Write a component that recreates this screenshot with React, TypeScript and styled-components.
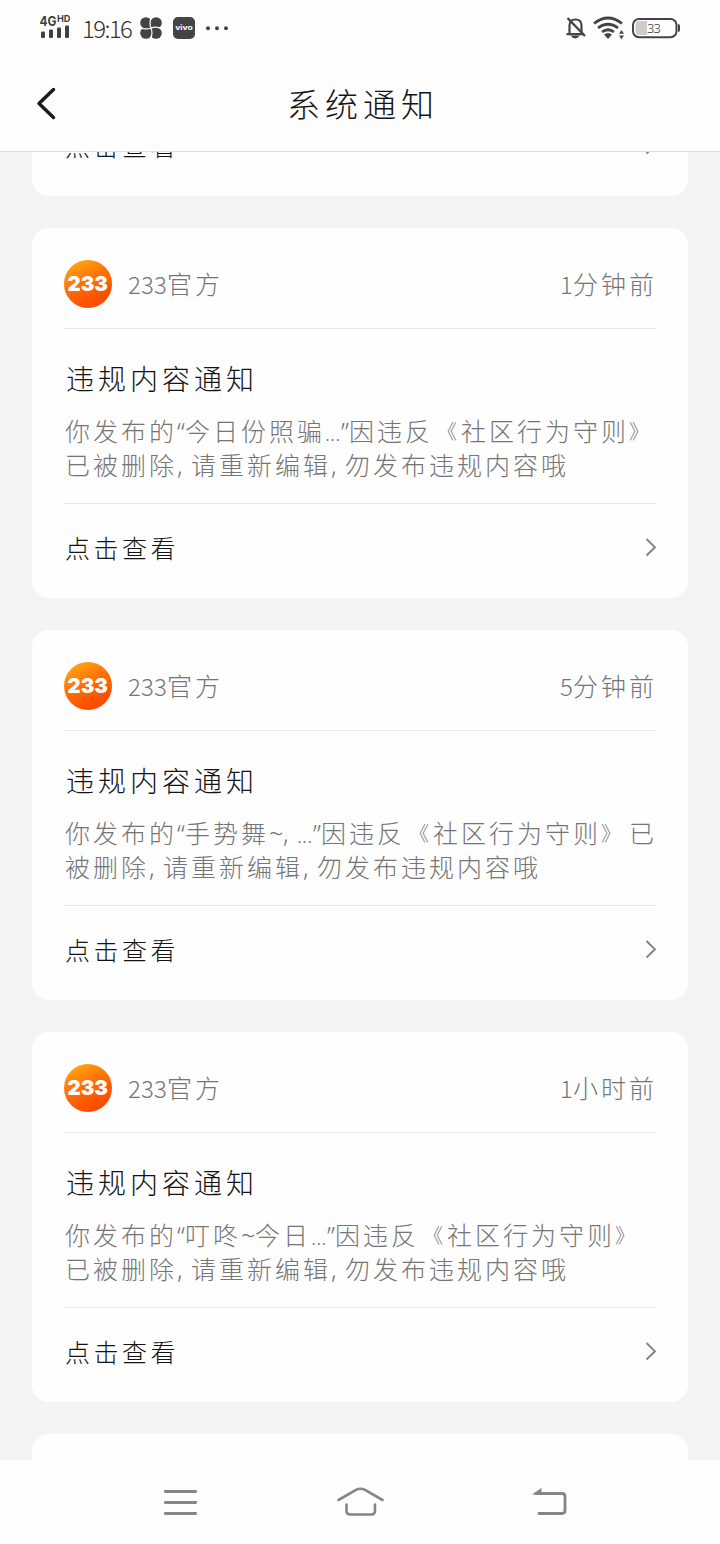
import React from "react";
import styled, { createGlobalStyle } from "styled-components";

const GlobalStyle = createGlobalStyle`
  * { box-sizing: border-box; }
  body { margin: 0; background: #fefefe; }
`;

const Screen = styled.div`
  width: 720px;
  height: 1544px;
  display: flex;
  flex-direction: column;
  overflow: hidden;
  background: #fefefe;
  color: #141414;
  font-family: "Noto Sans CJK SC", sans-serif;
  font-weight: 300;
`;

const StatusBar = styled.div`
  height: 56px;
  flex: none;
  display: flex;
  justify-content: space-between;
  padding: 0 39px 0 40px;
`;

const StatusGroup = styled.div`
  display: flex;
  align-items: center;
`;

const Clock = styled.span`
  width: 51px;
  margin: 0 7px 0 10px;
  font-size: 24px;
  line-height: 54px;
  letter-spacing: -1.6px;
  white-space: nowrap;
  color: #333;
`;

const TitleBar = styled.header`
  height: 96px;
  flex: none;
  display: grid;
  grid-template-columns: 60px 1fr 60px;
  align-items: center;
  border-bottom: 1px solid #dfdfdf;
  padding: 0 32px;
`;

const PageTitle = styled.h1`
  margin: -2px 0 0;
  padding-left: 6px;
  text-align: center;
  font-size: 33px;
  font-weight: 300;
  line-height: 40px;
  letter-spacing: 5px;
`;

const Feed = styled.main`
  height: 1308px;
  flex: none;
  overflow: hidden;
  background: #f4f4f4;
  padding: 0 32px;
`;

const CardList = styled.div`
  display: flex;
  flex-direction: column;
  gap: 32px;
  margin-top: -50px;
`;

const Card = styled.article`
  flex: none;
  padding: 0 32px;
  border-radius: 17px;
  background: #fefefe;
`;

const EmptyCard = styled(Card)`
  height: 370px;
`;

const CardHead = styled.div`
  height: 101px;
  display: flex;
  align-items: center;
  padding: 12px 0 0;
  border-bottom: 1px solid #e8e8e8;
`;

const Sender = styled.span`
  flex: 1;
  margin: -2px 0 0 16px;
  font-size: 25px;
  line-height: 36px;
  letter-spacing: 3px;
  color: #757575;
`;

const Time = styled(Sender)`
  flex: none;
  margin: -2px -1px 0 0;
`;

const Digit = styled.span`
  display: inline-block;
  width: 13px;
  letter-spacing: 0;
  font-size: 24px;
`;

const CardBody = styled.div`
  height: 175px;
  padding-top: 29px;
  border-bottom: 1px solid #e8e8e8;
`;

const Subject = styled.h2`
  margin: 0 0 15px;
  padding-left: 2px;
  font-size: 28px;
  font-weight: 300;
  line-height: 40px;
  letter-spacing: 4px;
`;

const Line = styled.p`
  margin: 0;
  padding-left: 1px;
  font-size: 25px;
  line-height: 34px;
  letter-spacing: 3px;
  white-space: nowrap;
  color: #757575;
`;

const Mark = styled.span<{ $w: number }>`
  display: inline-block;
  width: ${(p) => p.$w}px;
  font-family: "Noto Sans", "Noto Sans CJK SC", sans-serif;
  line-height: 1;
  letter-spacing: 0;
`;

const Bracket = styled.span<{ $open: boolean }>`
  display: inline-block;
  width: 28px;
  padding-right: ${(p) => (p.$open ? 4 : 0)}px;
  text-align: ${(p) => (p.$open ? "right" : "left")};
  font-size: 20px;
  line-height: 1;
  letter-spacing: 0;
  vertical-align: 2px;
`;

const CardFoot = styled.div`
  height: 94px;
  display: flex;
  align-items: center;
  justify-content: space-between;
  padding: 0 0 9px 1px;
`;

const FootLabel = styled.span`
  padding-top: 1px;
  font-size: 25px;
  letter-spacing: 3.5px;
`;

const NavBar = styled.nav`
  height: 84px;
  flex: none;
  background: #fefefe;
  display: grid;
  grid-template-columns: 179px 194px 50px;
  padding: 18px 0 0 156px;
`;

const markWidths: Record<string, number> = { "“": 8, "”": 8, "…": 16, ",": 14, "~": 14 };

const renderMarks = (text: string) =>
  text.split(/([“”…,~《》])/).map((part, i) => {
    if (part === "《" || part === "》") {
      return (
        <Bracket key={i} $open={part === "《"}>
          {part}
        </Bracket>
      );
    }
    return part in markWidths ? (
      <Mark key={i} $w={markWidths[part]}>
        {part === "…" ? <small>...</small> : part}
      </Mark>
    ) : (
      part
    );
  });

const renderDigits = (text: string) =>
  text.split(/(\d)/).map((part, i) => (/^\d$/.test(part) ? <Digit key={i}>{part}</Digit> : part));

const Signal = () => (
  <svg width="32" height="28" viewBox="0 0 32 28" fill="#3f3f3f">
    <text x="-0.5" y="11.5" fontFamily="Inter" fontWeight="700" fontSize="13" textLength="17" lengthAdjust="spacingAndGlyphs">4G</text>
    <text x="17" y="8" fontFamily="Inter" fontWeight="700" fontSize="9.5" textLength="13.5" lengthAdjust="spacingAndGlyphs">HD</text>
    <rect x="1" y="17.500" width="4" height="6.500" rx="1.2" />
    <rect x="9" y="15.500" width="4" height="8.500" rx="1.2" />
    <rect x="17" y="13.500" width="4" height="10.500" rx="1.2" />
    <rect x="25" y="11.500" width="4" height="12.500" rx="1.2" />
  </svg>
);

const Pinwheel = () => (
  <svg width="22" height="22" viewBox="0 0 22 22">
    <g fill="#444">
      <circle cx="5.900" cy="5.900" r="5.700" />
      <circle cx="16.100" cy="5.900" r="5.700" />
      <circle cx="5.900" cy="16.100" r="5.700" />
      <circle cx="16.100" cy="16.100" r="5.700" />
      <rect x="6" y="6" width="10" height="10" />
    </g>
    {[0, 90, 180, 270].map((a) => (
      <path key={a} transform={`rotate(${a} 11 11)`} d="M11 11Q8.800 5.500 11.600 0" fill="none" stroke="#fefefe" strokeWidth="1.200" />
    ))}
  </svg>
);

const BadgeSvg = styled.svg`
  margin-left: 11px;
`;

const VivoBadge = () => (
  <BadgeSvg width="22" height="22" viewBox="0 0 22 22">
    <rect width="22" height="22" rx="5" fill="#444" />
    <text x="2.200" y="13.200" fill="#fff" fontFamily="Inter" fontWeight="700" fontSize="6.500" textLength="17.600" lengthAdjust="spacingAndGlyphs">vivo</text>
  </BadgeSvg>
);

const DotsSvg = styled.svg`
  margin-left: 10px;
`;

const Dots = () => (
  <DotsSvg width="24" height="6" viewBox="0 0 24 6" fill="#444">
    <circle cx="3" cy="3.300" r="2" />
    <circle cx="12" cy="3.300" r="2" />
    <circle cx="21" cy="3.300" r="2" />
  </DotsSvg>
);

const StatusIcons = () => (
  <svg width="116" height="26" viewBox="565 15 116 26" fill="none" stroke="#444" strokeWidth="2.2">
    <path d="M569.5 34V25.5Q569.5 19.5 575.5 19.5Q581.5 19.5 581.5 25.5V34M566.5 34.2H584" />
    <path d="M567.5 18L585 36" strokeWidth="2.4" />
    <path d="M570.5 35.5Q575 41.5 580 35.5Z" fill="#444" stroke="none" />
    <path d="M594 23.5Q608 12.5 622 23.5M598 28Q608 20.5 618 28M602 32Q608 27.5 614 32" strokeWidth="2.7" />
    <path d="M604 34.5Q608 31.5 612 34.5L608 39Z" fill="#444" stroke="none" />
    <path d="M619 33.8L621.5 30L624 33.8ZM619 35.5H624L621.5 39.2Z" fill="#444" stroke="none" />
    <rect x="633" y="19" width="43.5" height="18.2" rx="6" strokeWidth="2" />
    <path d="M639 21H647V35H639Q635.5 35 635.5 31.5V24.5Q635.5 21 639 21Z" fill="#ccc" stroke="none" />
    <path d="M678 24Q680 24 680 26V30Q680 32 678 32Z" fill="#444" stroke="none" />
    <text x="647" y="32.500" fill="#333" stroke="none" fontFamily="Noto Sans" fontSize="13" textLength="14">33</text>
  </svg>
);

const BackChevron = () => (
  <svg width="28" height="34" viewBox="0 0 28 34" fill="none" stroke="#1c1c1c" strokeWidth="3.5" strokeLinecap="round" strokeLinejoin="round">
    <path d="M21.5 2.500L7 16.500L21.5 30.500" />
  </svg>
);

const Chevron = () => (
  <svg width="12" height="20" viewBox="0 0 12 20" fill="none" stroke="#858585" strokeWidth="2">
    <path d="M2.500 2L11 10.300L2.500 18.500" />
  </svg>
);

const AvatarSvg = styled.svg`
  flex: none;
  margin-top: -1px;
`;

const Avatar = () => (
  <AvatarSvg width="48" height="48" viewBox="0 0 48 48">
    <defs>
      <linearGradient id="sun" x1="0.15" y1="0" x2="0.6" y2="0.9">
        <stop offset="0" stopColor="#ffae12" />
        <stop offset="0.5" stopColor="#ff7208" />
        <stop offset="1" stopColor="#fc4c00" />
      </linearGradient>
    </defs>
    <circle cx="24" cy="24" r="24" fill="url(#sun)" />
    <text x="3.500" y="31.200" fill="#fff" fontFamily="Inter" fontWeight="900" fontSize="20.500" textLength="40.500" lengthAdjust="spacingAndGlyphs">233</text>
  </AvatarSvg>
);

const MenuIcon = () => (
  <svg width="50" height="50" viewBox="0 0 50 50" fill="none" stroke="#858585" strokeWidth="2.8" strokeLinecap="round">
    <path d="M9.3 13.5H39.7M9.3 24.5H39.7M9.3 35.5H39.7" />
  </svg>
);

const HomeIcon = () => (
  <svg width="50" height="50" viewBox="0 0 50 50" fill="none" stroke="#858585" strokeWidth="2.6" strokeLinecap="round" strokeLinejoin="round">
    <path d="M3.500 22L21 11.900Q25.500 9.600 30 11.900L47.500 22M11.500 26.500V32.500Q11.500 36.500 15.500 36.500H36Q40 36.500 40 32.500V26.500" />
  </svg>
);

const ReturnIcon = () => (
  <svg width="50" height="50" viewBox="0 0 50 50" fill="none" stroke="#858585" strokeWidth="2.8" strokeLinecap="round">
    <path d="M7 15.500H33Q36 15.500 36 18.500V32.500Q36 35.500 33 35.500H10" />
    <path d="M3 16.500L12.500 10V16.500Z" fill="#858585" stroke="none" />
  </svg>
);

interface Notice {
  time: string;
  lines: string[];
}

const notices: Notice[] = [
  { time: "1分钟前", lines: ["你发布的“今日份照骗…”因违反《社区行为守则》", "已被删除,请重新编辑,勿发布违规内容哦"] },
  { time: "5分钟前", lines: ["你发布的“手势舞~,…”因违反《社区行为守则》已", "被删除,请重新编辑,勿发布违规内容哦"] },
  { time: "1小时前", lines: ["你发布的“叮咚~今日…”因违反《社区行为守则》", "已被删除,请重新编辑,勿发布违规内容哦"] },
];

const ViewLink = () => (
  <CardFoot>
    <FootLabel>点击查看</FootLabel>
    <Chevron />
  </CardFoot>
);

const NoticeCard = ({ notice }: { notice: Notice }) => (
  <Card>
    <CardHead>
      <Avatar />
      <Sender>{renderDigits("233官方")}</Sender>
      <Time>{renderDigits(notice.time)}</Time>
    </CardHead>
    <CardBody>
      <Subject>违规内容通知</Subject>
      {notice.lines.map((line) => (
        <Line key={line}>{renderMarks(line)}</Line>
      ))}
    </CardBody>
    <ViewLink />
  </Card>
);

export default function App() {
  return (
    <>
      <GlobalStyle />
      <Screen>
        <StatusBar>
          <StatusGroup>
            <Signal />
            <Clock>19:16</Clock>
            <Pinwheel />
            <VivoBadge />
            <Dots />
          </StatusGroup>
          <StatusGroup>
            <StatusIcons />
          </StatusGroup>
        </StatusBar>
        <TitleBar>
          <BackChevron />
          <PageTitle>系统通知</PageTitle>
        </TitleBar>
        <Feed>
          <CardList>
            <Card>
              <ViewLink />
            </Card>
            {notices.map((notice) => (
              <NoticeCard key={notice.lines[0]} notice={notice} />
            ))}
            <EmptyCard />
          </CardList>
        </Feed>
        <NavBar>
          <MenuIcon />
          <HomeIcon />
          <ReturnIcon />
        </NavBar>
      </Screen>
    </>
  );
}
